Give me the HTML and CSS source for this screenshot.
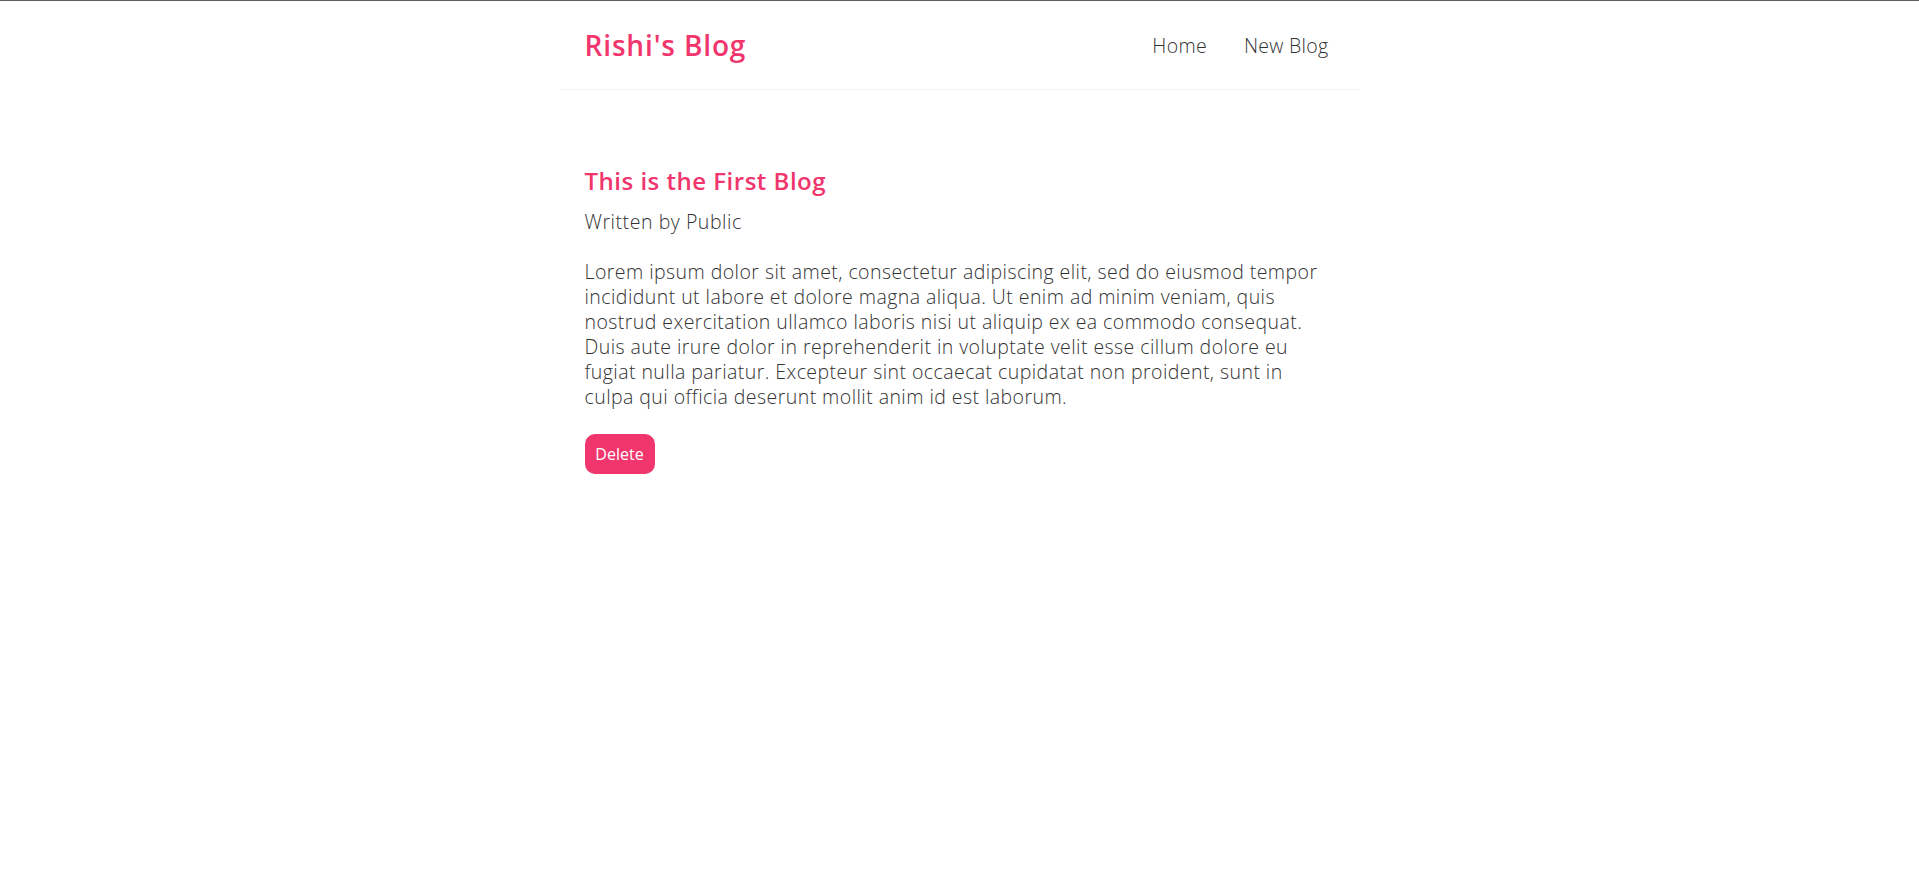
FILE: index.html
```html
<!DOCTYPE html>
<html lang="en">
<head>
<meta charset="utf-8">
<title>Rishi's Blog</title>
<link rel="stylesheet" href="styles.css">
</head>
<body>
<div class="app">
  <nav class="navbar">
    <h1 class="brand">Rishi's Blog</h1>
    <div class="links">
      <a href="#" class="link">Home</a>
      <a href="#" class="link">New Blog</a>
    </div>
  </nav>
  <main class="content">
    <article class="blog-details">
      <h2 class="blog-title">This is the First Blog</h2>
      <p class="author">Written by Public</p>
      <div class="body">Lorem ipsum dolor sit amet, consectetur adipiscing elit, sed do eiusmod tempor incididunt ut labore et dolore magna aliqua. Ut enim ad minim veniam, quis nostrud exercitation ullamco laboris nisi ut aliquip ex ea commodo consequat. Duis aute irure dolor in reprehenderit in voluptate velit esse cillum dolore eu fugiat nulla pariatur. Excepteur sint occaecat cupidatat non proident, sunt in culpa qui officia deserunt mollit anim id est laborum.</div>
      <button class="delete-btn" type="button">Delete</button>
    </article>
  </main>
</div>
</body>
</html>
```

FILE: styles.css
```css
* {
  box-sizing: border-box;
}

html, body {
  margin: 0;
  padding: 0;
  background: #ffffff;
}

body {
  border-top: 1px solid #5f5f5f;
  font-family: "Open Sans", "Liberation Sans", sans-serif;
  color: #333333;
}

.navbar {
  max-width: 800px;
  height: 89px;
  margin: 0 auto;
  padding: 0 25px;
  display: flex;
  align-items: center;
  border-bottom: 1px solid #f2f2f2;
}

.brand {
  margin: 0;
  font-size: 28px;
  font-weight: 600;
  letter-spacing: 0.85px;
  color: #f1356d;
}

.links {
  margin-left: auto;
  display: flex;
}

.link {
  margin-left: 25px;
  padding: 6px;
  font-size: 19.5px;
  font-weight: 300;
  letter-spacing: 0.3px;
  color: #333333;
  text-decoration: none;
}

.content {
  max-width: 800px;
  margin: 40px auto;
  padding: 20px 25px;
}

.blog-title {
  margin: 16px 0 0;
  font-size: 24px;
  font-weight: 600;
  letter-spacing: 0.5px;
  color: #f1356d;
  line-height: 30px;
}

.author {
  margin: 13px 0 0;
  font-size: 19.5px;
  font-weight: 300;
  letter-spacing: 0.55px;
  line-height: 25px;
}

.body {
  max-width: 742px;
  margin-top: 25px;
  font-size: 19.5px;
  font-weight: 300;
  letter-spacing: 0.44px;
  line-height: 25px;
}

.delete-btn {
  margin-top: 25px;
  width: 70px;
  height: 40px;
  padding: 0;
  border: 0;
  border-radius: 10px;
  background: #f1356d;
  color: #ffffff;
  font-family: "Open Sans", "Liberation Sans", sans-serif;
  font-size: 16px;
  cursor: pointer;
}
```
